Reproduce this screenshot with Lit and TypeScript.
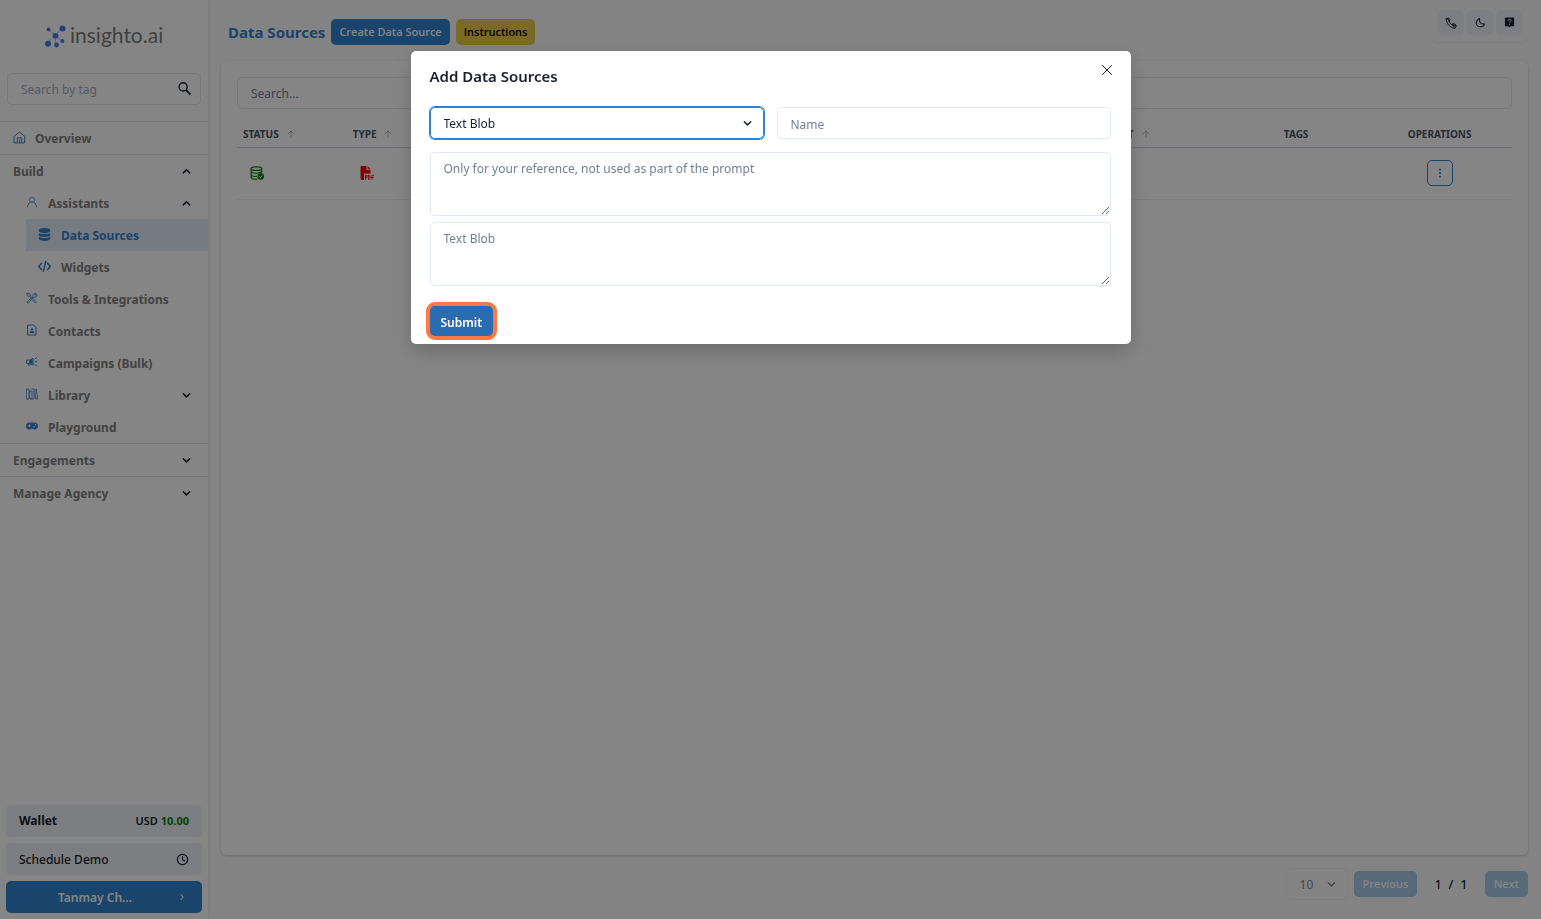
import { LitElement, html, css, svg, nothing } from "lit";
import { customElement } from "lit/decorators.js";

const line = (d: string, w = 2) => svg`<path d=${d} fill="none" stroke="currentColor" stroke-width=${w} stroke-linecap="round" stroke-linejoin="round"/>`;
const fill = (d: string) => svg`<path d=${d} fill="currentColor" fill-rule="evenodd"/>`;

const ICONS: Record<string, unknown> = {
  search: svg`<circle cx="9.5" cy="9" r="7.5" fill="none" stroke="currentColor" stroke-width="2.6"/><path d="M14.5 14.5L23 23" stroke="currentColor" stroke-width="3.2"/>`,
  home: svg`${line("M2.5 9.5L12 2L21.5 9.5V22H2.5Z", 1.8)}${line("M8 21V12.5H16V21", 1.8)}${line("M12 21V16", 1.4)}`,
  user: svg`<circle cx="12" cy="7.5" r="5.2" fill="none" stroke="currentColor" stroke-width="1.6"/>${line("M8.5 12L5 15.5L2.5 22M15.5 12L19 15.5L21.5 22", 1.6)}`,
  db: fill("M12 0C6 0 1.5 1.7 1.5 4V6C1.5 8 6 9.5 12 9.5S22.5 8 22.5 6V4C22.5 1.7 18 0 12 0ZM1.5 9V13C1.5 15 6 16.7 12 16.7S22.5 15 22.5 13V9C20 10.8 16 11.3 12 11.3S4 10.8 1.5 9ZM1.5 16.3V20C1.5 22.3 6 24 12 24S22.5 22.3 22.5 20V16.3C20 18 16 18.5 12 18.5S4 18 1.5 16.3Z"),
  code: line("M6.5 6L1.5 12L6.5 18M17.5 6L22.5 12L17.5 18M14 3L10 21", 2.8),
  tools: line("M3 2L8 4L9 8L20 19C21.5 21 19 22.5 17.5 21L7 9L3 8L2 4ZM2 20L14 9C13 5 16 1.5 20 2.5L17.5 5L19 7L22 5C22.5 9 19 11.5 15 10L5 22Z", 1.7),
  contact: svg`${line("M4 2H15L20 7V22H4Z", 2)}<circle cx="12" cy="10.5" r="2.3" fill="currentColor"/>${fill("M7.5 18C7.5 15 9.5 14 12 14S16.5 15 16.5 18Z")}`,
  horn: svg`${line("M2 8H7L14 5V18L7 15H2ZM5 15V18H8M18 6L20.5 3.5M18.5 11.5H22M18 17L20.5 19.5", 2)}${fill("M6 9L13 7V16L6 14Z")}`,
  library: line("M1.5 2H6V22H1.5ZM8 6H12V22H8ZM12 2H16V22H12M18 4L19 22H23L21 3Z", 1.6),
  game: fill("M6.5 5H17.5C21 5 24 8 24 12S21 19 18 19C15.5 19 14.5 17.5 12 17.5S8.5 19 6 19C3 19 0 16 0 12S3 5 6.5 5ZM6 8.5V10.5H4V12.5H6V14.5H8V12.5H10V10.5H8V8.5ZM16 12A1.5 1.5 0 1 0 16 15A1.5 1.5 0 1 0 16 12ZM19 8A1.5 1.5 0 1 0 19 11A1.5 1.5 0 1 0 19 8Z"),
  down: line("M5 8L12 15L19 8", 3.2),
  up: line("M5 15L12 8L19 15", 3.2),
  right: line("M9 6L15 12L9 18", 2.5),
  clock: svg`<circle cx="12" cy="12" r="9.5" fill="none" stroke="currentColor" stroke-width="2.2"/>${line("M12 6.5V12.5L16 14.5", 2)}`,
  sort: line("M12 22V3M4 11L12 3L20 11", 2.4),
  dbCheck: svg`<ellipse cx="11" cy="4.5" rx="9" ry="3" fill="none" stroke="currentColor" stroke-width="2"/>${line("M2 4.5V20C3 22 7 23 12 22.5M20 4.5V12M2 10C5 13 14 13.5 20 10M2 15.5C4 17.5 8 18.5 12 17.5", 2)}<circle cx="18.5" cy="18" r="5.5" fill="currentColor"/><path d="M15.8 18L18 20L21.5 16" fill="none" stroke="#fff" stroke-width="1.6"/>`,
  pdf: svg`${fill("M1 0H11V7H18V13H7V24H3C1.5 24 1 23 1 22ZM13 0L18 5.5H13Z")}${line("M9.5 23V16H12V19.5H9.5M14.5 16V23H16C18 22 18 17 16 16ZM20.5 23V16H24M20.5 19.5H23", 1.6)}`,
  phone: svg`${line("M2.5 4L7 1.5L10 5.5L8 9C9.5 12 12 14.5 15 16L15.5 13.5L20 14L22.5 18L20 22.5L15 21.5C8 18.5 2.5 11.5 2.5 4Z", 2)}${line("M5 3.5L9 8.5M15.5 14.5L17 18.5L21 17", 2.4)}`,
  moon: line("M10 3C8 11 13 16.5 21 15C19 20 14 22 10 21C5 20 2 16 3 11C4 7 6 4.5 10 3Z", 2.2),
  help: svg`${fill("M2 2Q2 1 3 1H21Q22 1 22 2V19Q22 20 21 20H15L12 23L9 20H3Q2 20 2 19Z")}<path d="M8.5 8.5C8.5 4 15.5 4 15.5 8C15.5 10.5 12 10.5 12 13.5M12 15.5V18" fill="none" stroke="#edf2f7" stroke-width="2"/>`,
  dots: svg`<circle cx="12" cy="3.5" r="2.6" fill="currentColor"/><circle cx="12" cy="12" r="2.6" fill="currentColor"/><circle cx="12" cy="20.5" r="2.6" fill="currentColor"/>`,
  close: line("M3 3L21 21M21 3L3 21", 2),
};

const icon = (name: string, size = 13) =>
  html`<svg class="icon" width=${size} height=${size} viewBox="0 0 24 24" aria-hidden="true">${ICONS[name]}</svg>`;

const base = css`
  * { box-sizing: border-box; }
  svg { display: block; flex: none; }
  a { color: inherit; text-decoration: none; }
  button, input, select, textarea { font: inherit; color: inherit; margin: 0; }
  button { border: 0; padding: 0; display: inline-flex; align-items: center; justify-content: center; background: none; white-space: nowrap; }
  input, textarea { border: 1px solid #e2e8f0; border-radius: 5px; background: transparent; padding: 0 13px; width: 100%; min-width: 0; outline: 0; display: block; }
  ::placeholder { color: #718096; opacity: 1; }
  .pick { position: relative; display: block; }
  .pick select { appearance: none; width: 100%; height: 32px; border: 1px solid #e2e8f0; border-radius: 5px; background: transparent; padding: 2px 13px 0; outline: 0; display: block; }
  .pick svg { position: absolute; right: 11px; top: 11px; pointer-events: none; }
`;

@customElement("side-bar")
class SideBar extends LitElement {
  static styles = [base, css`
    :host { display: flex; flex-direction: column; background: #fff; box-shadow: 0 0 3px rgba(0, 0, 0, 0.15); }
    .logo { display: flex; align-items: flex-start; gap: 4px; padding: 23px 0 0 44px; height: 73px; color: #7c7c7c; font: 21px/24px Lato, sans-serif; }
    .logo svg { margin-top: 2px; }
    .find { position: relative; display: block; margin: 0 7px 16px; color: #1a202c; }
    .find input { height: 32px; }
    .find ::placeholder { color: #a0aec0; }
    .find svg { position: absolute; right: 10px; top: 9px; }
    nav { display: flex; flex-direction: column; color: #808080; font-weight: 700; }
    .row { display: flex; align-items: center; height: 32px; padding: 0 16px 0 13px; }
    .text { flex: 1; padding-top: 2px; }
    .tail { color: #1a202c; }
    .top { border-top: 1px solid #e2e8f0; height: 33px; }
    .lead { color: #3182ce; margin-right: 9px; padding-bottom: 2px; }
    .sub { padding-left: 26px; }
    .sub .lead { margin-right: 10px; }
    .deep { margin-left: 26px; padding-left: 12px; }
    .deep .lead { margin-right: 10px; }
    .active { background: #e2ecf9; color: #3182ce; }
    .foot { margin-top: auto; padding: 6px; display: flex; flex-direction: column; gap: 6px; color: #1a202c; }
    .foot > * { display: flex; align-items: center; justify-content: space-between; height: 32px; border-radius: 5px; background: #edf2f7; padding: 0 13px; font-weight: 500; }
    .foot button span { padding-top: 2px; }
    .wallet b { font-weight: 700; }
    .money { font-size: 11px; font-weight: 600; }
    .money i { color: #008000; font-style: normal; font-weight: 700; }
    .foot .who { background: #3182ce; color: #fff; font-weight: 600; padding: 0 15px 0 7px; }
    .who span { flex: 1; }
  `];
  row(cls: string, lead: string, text: string, tail = "") {
    return html`<a class="row ${cls}" href="#">${lead ? html`<span class="lead">${icon(lead, cls === "sub" ? 12 : 13)}</span>` : nothing}<span class="text">${text}</span>${tail ? html`<span class="tail">${icon(tail, 11)}</span>` : nothing}</a>`;
  }
  render() {
    return html`
      <div class="logo">
        <svg width="22" height="23" viewBox="0 0 22 23"><path d="M4 4L11 10.5L18 3M3 18L11 10.5L18 16M11 10.5L12 20" stroke="#a9bdea" stroke-width="1" fill="none"/><g fill="#4a78ea"><circle cx="4.5" cy="4.5" r="1.9"/><circle cx="18.5" cy="3.5" r="3"/><circle cx="11.5" cy="10.8" r="2.9"/><circle cx="4" cy="18.8" r="3"/><circle cx="18.5" cy="16" r="2"/><circle cx="12.5" cy="20" r="2.4"/></g></svg>
        <span>insighto.ai</span>
      </div>
      <label class="find"><input type="text" aria-label="Search by tag" placeholder="Search by tag">${icon("search", 13)}</label>
      <nav>
        ${this.row("top", "home", "Overview")}
        ${this.row("top", "", "Build", "up")}
        ${this.row("sub", "user", "Assistants", "up")}
        ${this.row("deep active", "db", "Data Sources")}
        ${this.row("deep", "code", "Widgets")}
        ${this.row("sub", "tools", "Tools & Integrations")}
        ${this.row("sub", "contact", "Contacts")}
        ${this.row("sub", "horn", "Campaigns (Bulk)")}
        ${this.row("sub", "library", "Library", "down")}
        ${this.row("sub", "game", "Playground")}
        ${this.row("top", "", "Engagements", "down")}
        ${this.row("top", "", "Manage Agency", "down")}
      </nav>
      <div class="foot">
        <div class="wallet"><b>Wallet</b><span class="money">USD <i>10.00</i></span></div>
        <button><span>Schedule Demo</span>${icon("clock", 13)}</button>
        <button class="who"><span>Tanmay Ch...</span>${icon("right", 10)}</button>
      </div>`;
  }
}

@customElement("source-page")
class SourcePage extends LitElement {
  static styles = [base, css`
    :host { display: flex; flex-direction: column; min-width: 0; padding: 0 13px 19px; }
    header { display: flex; align-items: flex-start; height: 61px; padding-left: 7px; }
    h1 { margin: 0 6px 0 0; font-size: 15px; line-height: 26px; font-weight: 700; color: #3182ce; padding-top: 19px; }
    .btn { height: 26px; border-radius: 5px; padding: 0 8px; font: 600 11px/20px "Open Sans", sans-serif; background: #3182ce; color: #fff; margin: 19px 6px 0 0; }
    .gold { background: #ecc94b; color: #000; }
    .tools { margin-left: auto; display: flex; gap: 3px; padding: 10px 6px 7px 7px; border-radius: 6px; box-shadow: 0 1px 2px rgba(0, 0, 0, 0.06); }
    .tools button { width: 26px; height: 25px; border-radius: 5px; background: #edf2f7; color: #1a202c; }
    .card { flex: 1; border-radius: 6px; padding: 16px; background: #fff; box-shadow: 0 1px 3px rgba(0, 0, 0, 0.2); }
    .card > input { height: 32px; }
    table { width: 100%; border-collapse: collapse; table-layout: fixed; margin-top: 13px; }
    th { font-size: 10px; line-height: 12px; font-weight: 700; color: #4a5568; text-align: left; padding: 6px; border-bottom: 1px solid #cbd5e0; height: 25px; white-space: nowrap; }
    th span { display: inline-flex; align-items: center; gap: 8px; }
    th svg { color: #a0aec0; }
    td { height: 52px; padding: 0 13px; border-bottom: 1px solid #edf2f7; }
    th.mid, td.mid { text-align: center; padding: 0 8px 0 6px; }
    .ok { color: #008000; }
    .pdf { color: #ff0000; }
    .more { width: 26px; height: 26px; border: 1px solid #3182ce; border-radius: 5px; color: #3182ce; }
    footer { display: flex; align-items: center; justify-content: flex-end; padding-top: 13px; height: 45px; }
    .pick { width: 62px; margin-right: 6px; color: #8c8c8c; }
    .pick select { border-color: #edf2f7; }
    footer .btn { margin: 0; padding: 0 9px; opacity: 0.4; }
    .pages { margin: 0 17px; color: #000; white-space: pre; font-size: 13px; }
  `];
  head(text: string, cls = "", sort = true) {
    return html`<th class=${cls}><span>${text}${sort ? icon("sort", 8) : nothing}</span></th>`;
  }
  render() {
    return html`
      <header>
        <h1>Data Sources</h1>
        <button class="btn">Create Data Source</button>
        <button class="btn gold">Instructions</button>
        <div class="tools">
          <button aria-label="Call">${icon("phone", 12)}</button>
          <button aria-label="Dark mode">${icon("moon", 11)}</button>
          <button aria-label="Help">${icon("help", 11)}</button>
        </div>
      </header>
      <section class="card">
        <input type="text" aria-label="Search" placeholder="Search...">
        <table>
          <colgroup><col style="width:8.6%"><col style="width:10.4%"><col style="width:23.2%"><col style="width:23.1%"><col style="width:12.2%"><col style="width:11.3%"><col style="width:11.2%"></colgroup>
          <thead><tr>${this.head("STATUS")}${this.head("TYPE")}${this.head("NAME")}${this.head("DESCRIPTION")}${this.head("CREATED AT")}${this.head("TAGS", "mid", false)}${this.head("OPERATIONS", "mid", false)}</tr></thead>
          <tbody><tr><td class="ok">${icon("dbCheck", 14)}</td><td class="pdf">${icon("pdf", 14)}</td><td></td><td></td><td></td><td></td><td class="mid"><button class="more" aria-label="Operations">${icon("dots", 10)}</button></td></tr></tbody>
        </table>
      </section>
      <footer>
        <label class="pick"><select aria-label="Rows per page"><option>10</option></select>${icon("down", 11)}</label>
        <button class="btn">Previous</button>
        <span class="pages">1  /  1</span>
        <button class="btn">Next</button>
      </footer>`;
  }
}

@customElement("add-dialog")
class AddDialog extends LitElement {
  static styles = [base, css`
    :host { display: block; width: 720px; max-width: 100%; background: #fff; border-radius: 5px; box-shadow: 0 8px 20px rgba(0, 0, 0, 0.2); padding: 13px 20px 8px 19px; color: #1a202c; }
    .title { display: flex; justify-content: space-between; align-items: flex-start; height: 43px; }
    h2 { margin: 0; font-size: 15px; line-height: 24px; font-weight: 600; }
    .title button { width: 26px; height: 26px; margin: -7px -9px 0 0; }
    form { display: grid; grid-template-columns: 1fr 1fr; column-gap: 13px; }
    form input { height: 32px; padding-top: 2px; }
    .pick select { border-color: #3182ce; box-shadow: 0 0 0 1px #3182ce; }
    textarea { grid-column: 1 / -1; height: 64px; padding: 7px 13px; line-height: 18px; resize: vertical; margin-top: 13px; }
    textarea + textarea { margin-top: 6px; }
    .submit { justify-self: start; margin-top: 20px; height: 30px; padding: 3px 11px 0; background: #2b6cb0; color: #fff; border-radius: 5px; font-weight: 600; box-shadow: 0 0 0 4px #ff7742; }
  `];
  render() {
    return html`
      <div class="title"><h2>Add Data Sources</h2><button aria-label="Close">${icon("close", 12)}</button></div>
      <form>
        <label class="pick"><select aria-label="Source type"><option>Text Blob</option></select>${icon("down", 11)}</label>
        <input type="text" aria-label="Name" placeholder="Name">
        <textarea aria-label="Description" placeholder="Only for your reference, not used as part of the prompt"></textarea>
        <textarea aria-label="Text Blob" placeholder="Text Blob"></textarea>
        <button type="button" class="submit">Submit</button>
      </form>`;
  }
}

@customElement("app-root")
class AppRoot extends LitElement {
  static styles = [base, css`
    :host { display: block; font: 12px/20px "Noto Sans", "Open Sans", sans-serif; color: #1a202c; }
    .shell { display: grid; grid-template-columns: 208px 1fr; min-height: 100vh; background: #fcfcfc; }
    .overlay { position: fixed; inset: 0; display: flex; justify-content: center; align-items: flex-start; padding-top: 51px; background: rgba(0, 0, 0, 0.48); }
  `];
  render() {
    return html`<div class="shell"><side-bar></side-bar><source-page></source-page></div>
      <div class="overlay"><add-dialog role="dialog" aria-label="Add Data Sources"></add-dialog></div>`;
  }
}
